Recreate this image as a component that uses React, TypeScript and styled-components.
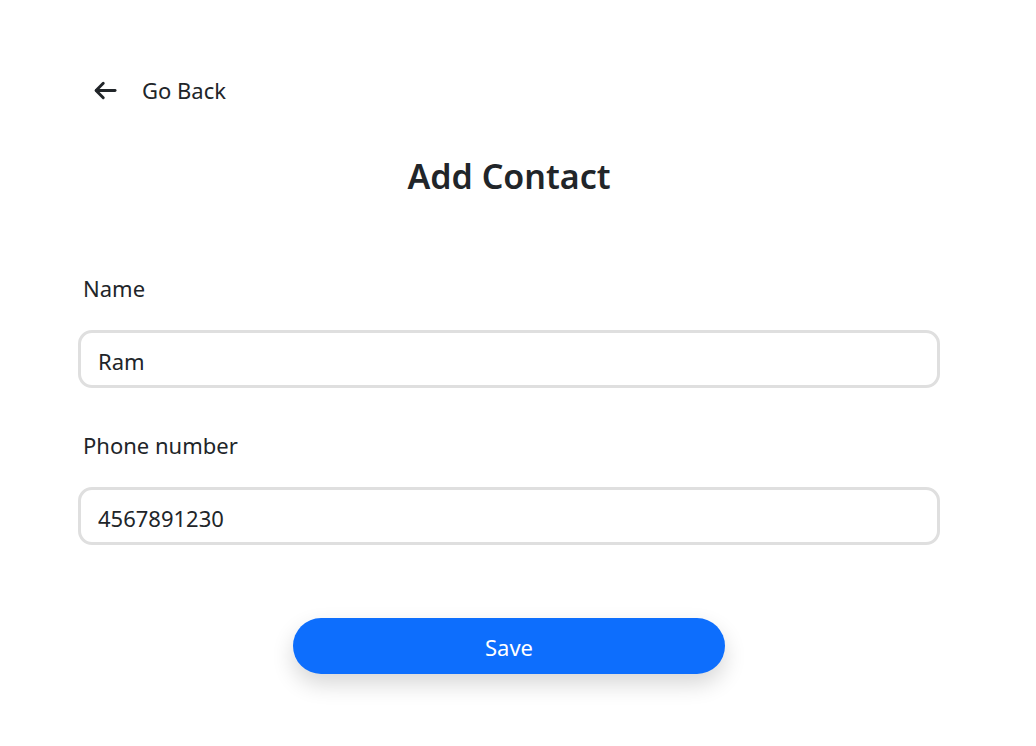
import styled, { createGlobalStyle } from 'styled-components';

const GlobalStyle = createGlobalStyle`
  body {
    margin: 0;
    background: #ffffff;
    font-family: "Noto Sans", "Open Sans", sans-serif;
    color: #212529;
  }
`

const AddContact = () => {
  return (
    <>
      <GlobalStyle />
      <Page>
        <BackLink href="#">
          <svg width="27" height="27" viewBox="0 0 24 24" fill="none" stroke="#212529" strokeWidth="2.6" strokeLinecap="round" strokeLinejoin="round">
            <path d="M20.5 12H4" />
            <path d="M10 5.5L3.6 12l6.4 6.5" />
          </svg>
          <span>Go Back</span>
        </BackLink>
        <Title>Add Contact</Title>
        <Form onSubmit={(e) => e.preventDefault()}>
          <Field>
            <Label htmlFor="name">Name</Label>
            <Input id="name" defaultValue="Ram" />
          </Field>
          <Field>
            <Label htmlFor="phone">Phone number</Label>
            <Input id="phone" defaultValue="4567891230" />
          </Field>
          <SaveButton type="submit">Save</SaveButton>
        </Form>
      </Page>
    </>
  )
}

const Page = styled.div`
  display: flex;
  flex-direction: column;
  padding: 75px 96px 40px 78px;
`

const BackLink = styled.a`
  display: flex;
  align-items: center;
  gap: 23px;
  align-self: flex-start;
  padding-left: 14px;
  height: 30px;
  font-size: 22px;
  color: #212529;
  text-decoration: none;
`

const Title = styled.h1`
  margin: 49px 0 0;
  text-align: center;
  font-size: 34px;
  line-height: 44px;
  font-weight: 600;
  color: #212529;
`

const Form = styled.form`
  display: flex;
  flex-direction: column;
  gap: 42px;
  margin-top: 75px;
`

const Field = styled.div`
  display: flex;
  flex-direction: column;
  gap: 27px;
`

const Label = styled.label`
  padding-left: 5px;
  font-size: 22px;
  line-height: 30px;
  color: #212529;
`

const Input = styled.input`
  box-sizing: border-box;
  height: 58px;
  width: 100%;
  padding: 3px 17px 0;
  border: 3px solid #dfdfdf;
  border-radius: 14px;
  font-family: inherit;
  font-size: 22px;
  color: #212529;
  outline: none;
`

const SaveButton = styled.button`
  align-self: center;
  width: 432px;
  height: 56px;
  margin-top: 31px;
  padding-top: 3px;
  border: none;
  border-radius: 28px;
  background: #0d6efd;
  color: #ffffff;
  font-family: inherit;
  font-size: 22px;
  box-shadow: 0 10px 22px rgba(0, 0, 0, 0.16);
  cursor: pointer;
`

export default AddContact;
